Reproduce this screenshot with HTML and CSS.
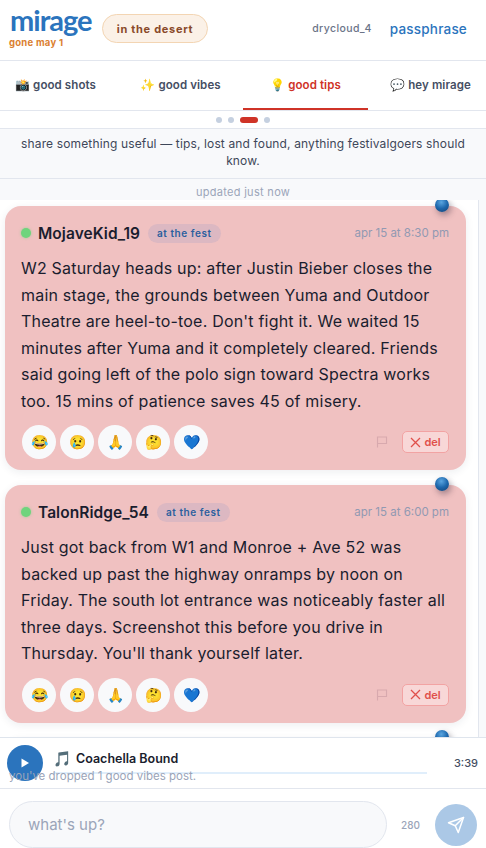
FILE: index.html
```html
<!DOCTYPE html>
<html lang="en">
<head>
  <meta charset="UTF-8" />
  <meta name="viewport" content="width=device-width, initial-scale=1.0"/>
  <title>mirage</title>
  <link rel="stylesheet" href="styles.css">
</head>
<body>

<div class="app">
  <header>
    <div class="logo">
      <div class="logo-name">mirage</div>
      <div class="logo-sub">gone may 1</div>
    </div>
    <div class="location">in the desert</div>
    <div class="user">drycloud_4</div>
    <a class="pass">passphrase</a>
  </header>

  <nav class="tabs">
    <div class="tab"><span class="tab-emoji">📸</span>good shots</div>
    <div class="tab"><span class="tab-emoji">✨</span>good vibes</div>
    <div class="tab active"><span class="tab-emoji">💡</span>good tips</div>
    <div class="tab"><span class="tab-emoji">💬</span>hey mirage</div>
  </nav>

  <div class="dots">
    <span class="dot"></span>
    <span class="dot"></span>
    <span class="dot current"></span>
    <span class="dot"></span>
  </div>

  <div class="banner">share something useful — tips, lost and found, anything festivalgoers should know.</div>
  <div class="updated">updated just now</div>

  <div class="feed">
    <div class="posts">
      <article class="card">
        <span class="pin"></span>
        <div class="card-head">
          <span class="online"></span>
          <span class="name">MojaveKid_19</span>
          <span class="badge">at the fest</span>
          <span class="time">apr 15 at 8:30 pm</span>
        </div>
        <p class="body">W2 Saturday heads up: after Justin Bieber closes the main stage, the grounds between Yuma and Outdoor Theatre are heel-to-toe. Don't fight it. We waited 15 minutes after Yuma and it completely cleared. Friends said going left of the polo sign toward Spectra works too. 15 mins of patience saves 45 of misery.</p>
        <div class="card-foot">
          <button class="react">😂</button>
          <button class="react">😢</button>
          <button class="react">🙏</button>
          <button class="react">🤔</button>
          <button class="react">💙</button>
          <svg class="flag" width="12" height="12" viewBox="0 0 12 12" fill="none" stroke="currentColor" stroke-width="1.1"><path d="M1.500 11.500V1h9v6.500h-9"/></svg>
          <button class="del"><svg width="11" height="11" viewBox="0 0 11 11" fill="none" stroke="currentColor" stroke-width="1.3"><path d="M1 1l9 9M10 1l-9 9"/></svg>del</button>
        </div>
      </article>

      <article class="card">
        <span class="pin"></span>
        <div class="card-head">
          <span class="online"></span>
          <span class="name">TalonRidge_54</span>
          <span class="badge">at the fest</span>
          <span class="time">apr 15 at 6:00 pm</span>
        </div>
        <p class="body">Just got back from W1 and Monroe + Ave 52 was backed up past the highway onramps by noon on Friday. The south lot entrance was noticeably faster all three days. Screenshot this before you drive in Thursday. You'll thank yourself later.</p>
        <div class="card-foot">
          <button class="react">😂</button>
          <button class="react">😢</button>
          <button class="react">🙏</button>
          <button class="react">🤔</button>
          <button class="react">💙</button>
          <svg class="flag" width="12" height="12" viewBox="0 0 12 12" fill="none" stroke="currentColor" stroke-width="1.1"><path d="M1.500 11.500V1h9v6.500h-9"/></svg>
          <button class="del"><svg width="11" height="11" viewBox="0 0 11 11" fill="none" stroke="currentColor" stroke-width="1.3"><path d="M1 1l9 9M10 1l-9 9"/></svg>del</button>
        </div>
      </article>

      <article class="card">
        <span class="pin"></span>
      </article>
    </div>
    <div class="scrollbar"></div>
  </div>

  <div class="player">
    <button class="play"><svg width="10" height="10" viewBox="0 0 10 10"><path d="M1.500 .5v9l7.500-4.500z" fill="#fff"/></svg></button>
    <div class="track">
      <div class="track-title"><span class="note">🎵</span>Coachella Bound</div>
      <div class="progress"></div>
    </div>
    <div class="duration">3:39</div>
    <div class="toast">you've dropped 1 good vibes post.</div>
  </div>

  <div class="composer">
    <div class="input">what's up?</div>
    <span class="count">280</span>
    <button class="send">
      <svg width="18" height="18" viewBox="0 0 24 24" fill="none" stroke="#fff" stroke-width="2" stroke-linejoin="round" stroke-linecap="round"><path d="M22 2L11 13"/><path d="M22 2l-7 20-4-9-9-4z"/></svg>
    </button>
  </div>
</div>

</body>
</html>
```

FILE: styles.css
```css
* {
  box-sizing: border-box;
}
body {
  font-family: "Inter", "Noto Sans", sans-serif;
  margin: 0;
  padding: 0;
  background: #fff;
  color: #1a1d2e;
}
.app {
  height: 848px;
  display: flex;
  flex-direction: column;
  overflow: hidden;
}
button {
  font-family: inherit;
  border: none;
  padding: 0;
}

header {
  height: 61px;
  flex: none;
  display: flex;
  align-items: center;
  padding: 0 19px 3px 9px;
  border-bottom: 1px solid #e2e6ee;
}
.logo {
  width: 83px;
  flex: none;
  margin-top: 2px;
}
.logo-name {
  font-family: "Lato", sans-serif;
  font-size: 29px;
  line-height: 18px;
  font-weight: 700;
  letter-spacing: -1px;
  padding-left: 1px;
  color: #2b74bd;
}
.logo-sub {
  margin-top: 8px;
  font-size: 9.500px;
  line-height: 11px;
  font-weight: 700;
  letter-spacing: .25px;
  color: #db8031;
}
.location {
  margin-left: 10px;
  height: 29px;
  width: 106px;
  display: flex;
  align-items: center;
  justify-content: center;
  border: 1px solid #f3d5b3;
  border-radius: 15px;
  background: #fbf1e7;
  color: #8a4a2a;
  font-size: 11px;
  font-weight: 700;
  letter-spacing: .7px;
}
.user {
  margin-left: auto;
  font-size: 10.500px;
  font-weight: 500;
  letter-spacing: .4px;
  color: #6b7488;
}
.pass {
  margin-left: 18px;
  font-size: 13.500px;
  font-weight: 500;
  letter-spacing: .2px;
  color: #2b74bd;
}

.tabs {
  height: 50px;
  flex: none;
  display: flex;
  border-bottom: 1px solid #e2e6ee;
  overflow: hidden;
}
.tab {
  flex: none;
  width: 125px;
  display: flex;
  align-items: center;
  justify-content: center;
  font-size: 11.500px;
  font-weight: 600;
  letter-spacing: .1px;
  color: #454e63;
  white-space: nowrap;
  border-bottom: 2px solid transparent;
}
.tab:first-child {
  margin-left: -7px;
}
.tab-emoji {
  margin-right: 3px;
  font-size: 12px;
}
.tab.active {
  color: #cf3327;
  border-bottom-color: #cf3327;
}

.dots {
  height: 18px;
  flex: none;
  display: flex;
  align-items: center;
  justify-content: center;
  gap: 6px;
  border-bottom: 1px solid #e2e6ee;
}
.dot {
  width: 6px;
  height: 6px;
  border-radius: 50%;
  background: #c5d0e0;
}
.dot.current {
  width: 18px;
  border-radius: 3px;
  background: #cf3327;
}

.banner {
  height: 50px;
  flex: none;
  padding: 7px 16px 0;
  text-align: center;
  font-size: 12px;
  letter-spacing: .14px;
  line-height: 16.500px;
  color: #3e4759;
  background: #f8f9fb;
  border-bottom: 1px solid #e2e6ee;
}
.updated {
  height: 21px;
  flex: none;
  text-align: center;
  font-size: 11px;
  letter-spacing: .3px;
  line-height: 27px;
  color: #9ba5b9;
  background: #f8f9fb;
}

.feed {
  flex: 1;
  min-height: 0;
  display: flex;
  overflow: hidden;
}
.posts {
  flex: 1;
  padding: 6px 12px 0 5px;
  display: flex;
  flex-direction: column;
  gap: 15px;
}
.scrollbar {
  width: 8px;
  background: #f8f9fb;
  border-left: 1px solid #e2e6ee;
}
.card {
  position: relative;
  flex: none;
  min-height: 40px;
  padding: 16px 17px 11px 16px;
  border-radius: 16px;
  background: #f0c1c1;
  box-shadow: 0 2px 8px rgba(30,40,70,.08);
}
.pin {
  position: absolute;
  top: -8px;
  right: 17px;
  width: 14px;
  height: 14px;
  border-radius: 50%;
  background: radial-gradient(circle at 45% 30%, #5aa5e0, #1d67ac 50%, #153f70);
  box-shadow: 2px 3px 6px rgba(40,30,50,.4);
}
.card-head {
  display: flex;
  align-items: center;
  height: 22px;
}
.online {
  width: 10px;
  height: 10px;
  border-radius: 50%;
  background: #6fd47d;
  margin-right: 7px;
  box-shadow: 0 0 3px rgba(110,210,125,.6);
}
.name {
  font-size: 15.500px;
  font-weight: 600;
  letter-spacing: .05px;
  color: #1a1d2e;
}
.badge {
  margin-left: 8px;
  height: 19px;
  padding: 0 9px;
  display: flex;
  align-items: center;
  border-radius: 10px;
  background: #dcb8c2;
  color: #2b5f9e;
  font-size: 10px;
  font-weight: 600;
  letter-spacing: .55px;
}
.time {
  margin-left: auto;
  font-size: 11.500px;
  color: #9299b2;
}
.body {
  margin: 11px 0 0;
  font-size: 16px;
  letter-spacing: .2px;
  line-height: 26.500px;
  color: #1a1d2e;
}
.card-foot {
  display: flex;
  align-items: center;
  gap: 4px;
  margin: 11px 0 0 1px;
}
.react {
  width: 34px;
  height: 34px;
  border-radius: 50%;
  background: #f8f9fb;
  font-size: 14px;
  line-height: 34px;
}
.flag {
  margin-left: auto;
  margin-right: 10px;
  color: #d8a9ae;
}
.del {
  height: 22px;
  width: 47px;
  display: flex;
  align-items: center;
  justify-content: center;
  gap: 3px;
  border: 1px solid #f2a3a3;
  border-radius: 5px;
  background: #f8d7d7;
  color: #e0504b;
  font-size: 11px;
  font-weight: 600;
}

.player {
  position: relative;
  height: 52px;
  flex: none;
  display: flex;
  align-items: flex-start;
  background: #fff;
  border-top: 1px solid #dfe5ed;
  border-bottom: 1px solid #e2e6ee;
}
.play {
  width: 36px;
  height: 36px;
  margin: 7px 0 0 7px;
  flex: none;
  display: flex;
  align-items: center;
  justify-content: center;
  border-radius: 50%;
  background: #2b74bd;
}
.track {
  width: 374px;
  margin-left: 10px;
  padding-top: 10px;
}
.track-title {
  display: flex;
  align-items: center;
  height: 21px;
  font-size: 12.500px;
  font-weight: 600;
  color: #1a1d2e;
}
.note {
  font-size: 15px;
  margin-right: 4px;
}
.progress {
  height: 2px;
  margin-top: 3px;
  background: #e0eefb;
}
.duration {
  margin-left: auto;
  margin-right: 8px;
  margin-top: 18px;
  font-size: 11px;
  font-weight: 500;
  color: #454e63;
}
.toast {
  position: absolute;
  left: 9px;
  top: 31px;
  font-size: 11.500px;
  color: #9aa4b8;
}

.composer {
  height: 59px;
  flex: none;
  display: flex;
  align-items: center;
  padding: 12px 9px 0;
}
.input {
  width: 378px;
  height: 47px;
  flex: none;
  display: flex;
  align-items: center;
  padding-left: 18px;
  border: 1px solid #e2e6ee;
  border-radius: 24px;
  background: #f8f9fb;
  color: #9ba5b9;
  font-size: 15px;
}
.count {
  margin-left: 14px;
  font-size: 10px;
  font-weight: 500;
  color: #9ba5b9;
}
.send {
  margin-left: auto;
  width: 42px;
  height: 42px;
  display: flex;
  align-items: center;
  justify-content: center;
  border-radius: 50%;
  background: #abc8e6;
}
```
